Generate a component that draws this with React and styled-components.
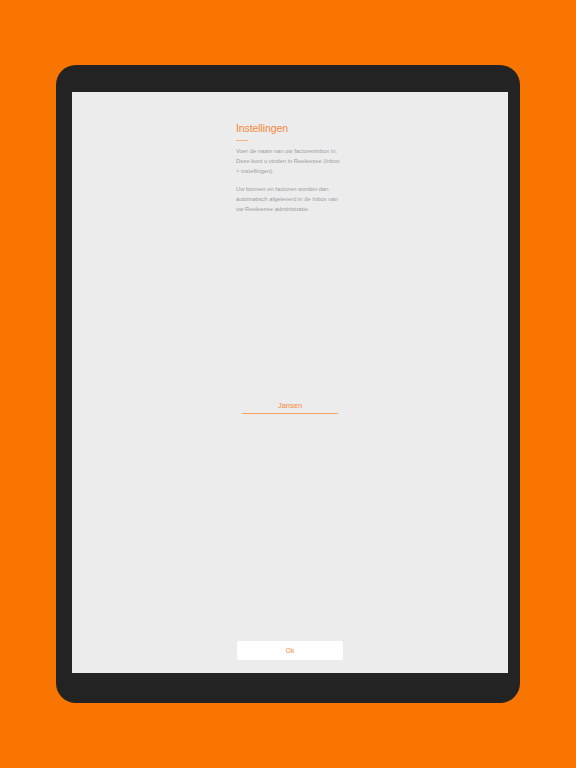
import React, { useState } from "react";
import styled, { createGlobalStyle } from "styled-components";

const GlobalStyle = createGlobalStyle`
  html, body {
    margin: 0;
    padding: 0;
    background: #f77500;
  }
  body {
    font-family: "Liberation Sans", Arial, sans-serif;
  }
`;

const Page = styled.div`
  width: 576px;
  height: 768px;
  background: #f77500;
  padding: 65px 56px 0 56px;
  box-sizing: border-box;
`;

const Device = styled.div`
  width: 464px;
  height: 638px;
  background: #232323;
  border-radius: 20px;
  padding: 27px 12px 30px 16px;
  box-sizing: border-box;
  display: flex;
`;

const Screen = styled.div`
  flex: 1;
  background: #ececec;
  display: flex;
  flex-direction: column;
  align-items: center;
`;

const Column = styled.div`
  width: 108px;
  flex: 1;
  display: flex;
  flex-direction: column;
`;

const Title = styled.h1`
  margin: 29px 0 0 0;
  font-size: 10.5px;
  line-height: 14px;
  font-weight: 400;
  color: #f7873a;
  letter-spacing: -0.1px;
`;

const Rule = styled.div`
  width: 12px;
  height: 1px;
  background: #f9b37a;
  margin-top: 5px;
`;

const Text = styled.p`
  margin: ${(p) => (p.$first ? "5px" : "8px")} 0 0 0;
  font-size: 5.85px;
  line-height: 10px;
  color: #9d9d9d;
`;

const Field = styled.div`
  margin: 187px auto 0 auto;
  width: 96px;
  border-bottom: 1px solid #f7a35f;
  display: flex;
  justify-content: center;
`;

const Input = styled.input`
  width: 100%;
  height: 12px;
  box-sizing: border-box;
  border: none;
  background: transparent;
  outline: none;
  text-align: center;
  font-family: "Liberation Sans", Arial, sans-serif;
  font-size: 7.5px;
  color: #f7883a;
  padding: 0 0 3px 0;
`;

const Spacer = styled.div`
  flex: 1;
`;

const Button = styled.button`
  height: 19px;
  width: 106px;
  background: #ffffff;
  border: none;
  border-radius: 2px;
  color: #f7883a;
  font-family: "Liberation Sans", Arial, sans-serif;
  font-size: 6.5px;
  margin: 0 0 13px 1px;
  padding: 0;
`;

export default function App() {
  const [name, setName] = useState("Jansen");
  return (
    <>
      <GlobalStyle />
      <Page>
        <Device>
          <Screen>
            <Column>
              <Title>Instellingen</Title>
              <Rule />
              <Text $first>
                Voer de naam van uw factureninbox in. Deze kunt u vinden in
                Reeleezee (Inbox &gt; instellingen).
              </Text>
              <Text>
                Uw bonnen en facturen worden dan automatisch afgeleverd in de
                Inbox van uw Reeleezee administratie.
              </Text>
              <Field>
                <Input value={name} onChange={(e) => setName(e.target.value)} />
              </Field>
              <Spacer />
              <Button>Ok</Button>
            </Column>
          </Screen>
        </Device>
      </Page>
    </>
  );
}
